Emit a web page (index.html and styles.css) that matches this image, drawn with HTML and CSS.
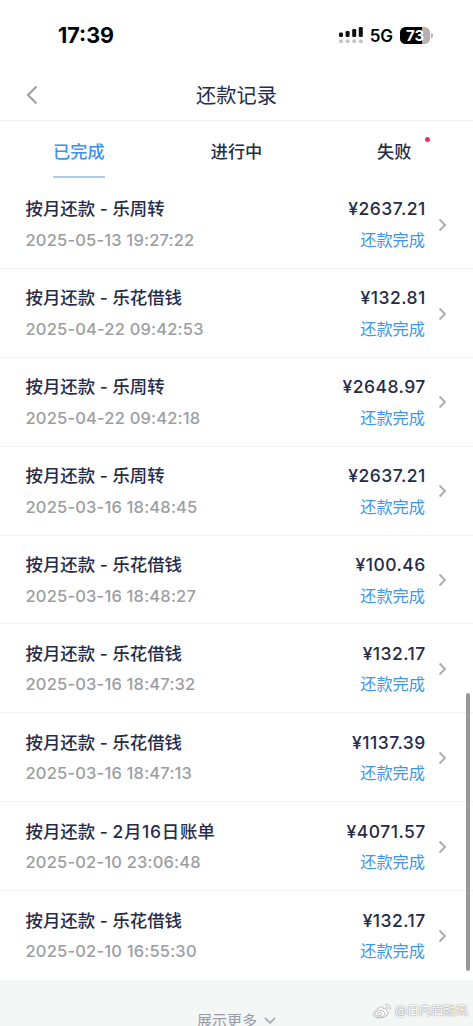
FILE: index.html
```
<!DOCTYPE html>
<html lang="zh-CN">
<head>
<meta charset="utf-8">
<title>还款记录</title>
<link rel="stylesheet" href="styles.css">
</head>
<body>
<div class="screen">
  <div class="status">
    <span class="clock">17:39</span>
    <div class="indicators">
      <svg class="signal" width="24" height="17" viewBox="0 0 24 17"><g fill="#111"><rect x="0" y="5.5" width="4" height="4.5" rx="1.3"/><rect x="6.6" y="4" width="4" height="6" rx="1.3"/><rect x="13.2" y="2" width="4" height="8" rx="1.3"/><rect x="19.8" y="0" width="4" height="10" rx="1.3"/></g><g fill="#c4c4c4"><circle cx="2" cy="14.2" r="2"/><circle cx="8.6" cy="14.2" r="2"/><circle cx="15.2" cy="14.2" r="2"/><circle cx="21.8" cy="14.2" r="2"/></g></svg>
      <span class="network">5G</span>
      <div class="battery"><span>73</span></div><i class="cap"></i>
    </div>
  </div>
  <header class="nav">
    <svg class="back" width="12" height="20" viewBox="0 0 12 20"><path d="M10.5 1.5 2 10l8.500 8.500" fill="none" stroke="#a0a0a2" stroke-width="2.200"/></svg>
    <h1>还款记录</h1>
  </header>
  <nav class="tabs">
    <span class="tab active">已完成</span>
    <span class="tab">进行中</span>
    <span class="tab">失败<i class="dot"></i></span>
  </nav>
  <main class="list">
    <div class="row"><div class="info"><b class="name">按月还款 - 乐周转</b><span class="date">2025-05-13 19:27:22</span></div><div class="sum"><b class="amount">¥2637.21</b><span class="state">还款完成</span></div><svg class="go" viewBox="0 0 9 14"><path d="M1.500 1.500 7 7l-5.500 5.500"/></svg></div>
    <div class="row"><div class="info"><b class="name">按月还款 - 乐花借钱</b><span class="date">2025-04-22 09:42:53</span></div><div class="sum"><b class="amount">¥132.81</b><span class="state">还款完成</span></div><svg class="go" viewBox="0 0 9 14"><path d="M1.500 1.500 7 7l-5.500 5.500"/></svg></div>
    <div class="row"><div class="info"><b class="name">按月还款 - 乐周转</b><span class="date">2025-04-22 09:42:18</span></div><div class="sum"><b class="amount">¥2648.97</b><span class="state">还款完成</span></div><svg class="go" viewBox="0 0 9 14"><path d="M1.500 1.500 7 7l-5.500 5.500"/></svg></div>
    <div class="row"><div class="info"><b class="name">按月还款 - 乐周转</b><span class="date">2025-03-16 18:48:45</span></div><div class="sum"><b class="amount">¥2637.21</b><span class="state">还款完成</span></div><svg class="go" viewBox="0 0 9 14"><path d="M1.500 1.500 7 7l-5.500 5.500"/></svg></div>
    <div class="row"><div class="info"><b class="name">按月还款 - 乐花借钱</b><span class="date">2025-03-16 18:48:27</span></div><div class="sum"><b class="amount">¥100.46</b><span class="state">还款完成</span></div><svg class="go" viewBox="0 0 9 14"><path d="M1.500 1.500 7 7l-5.500 5.500"/></svg></div>
    <div class="row"><div class="info"><b class="name">按月还款 - 乐花借钱</b><span class="date">2025-03-16 18:47:32</span></div><div class="sum"><b class="amount">¥132.17</b><span class="state">还款完成</span></div><svg class="go" viewBox="0 0 9 14"><path d="M1.500 1.500 7 7l-5.500 5.500"/></svg></div>
    <div class="row"><div class="info"><b class="name">按月还款 - 乐花借钱</b><span class="date">2025-03-16 18:47:13</span></div><div class="sum"><b class="amount">¥1137.39</b><span class="state">还款完成</span></div><svg class="go" viewBox="0 0 9 14"><path d="M1.500 1.500 7 7l-5.500 5.500"/></svg></div>
    <div class="row"><div class="info"><b class="name">按月还款 - <span class="bill">2月16日</span>账单</b><span class="date">2025-02-10 23:06:48</span></div><div class="sum"><b class="amount">¥4071.57</b><span class="state">还款完成</span></div><svg class="go" viewBox="0 0 9 14"><path d="M1.500 1.500 7 7l-5.500 5.500"/></svg></div>
    <div class="row"><div class="info"><b class="name">按月还款 - 乐花借钱</b><span class="date">2025-02-10 16:55:30</span></div><div class="sum"><b class="amount">¥132.17</b><span class="state">还款完成</span></div><svg class="go" viewBox="0 0 9 14"><path d="M1.500 1.500 7 7l-5.500 5.500"/></svg></div>
  </main>
  <footer class="more"><span>展示更多</span><svg width="12" height="8" viewBox="0 0 12 8"><path d="M1 1l5 5 5-5" fill="none" stroke="#aeb0b6" stroke-width="1.800"/></svg></footer>
  <i class="scrollbar"></i>
  <div class="watermark">
    <svg width="19" height="17" viewBox="0 0 19 17" fill="#fff" stroke="#aaa" stroke-width=".8"><path d="M7.500 4.200c1.800-.8 3 0 2.600 1.700 2-.8 3.800-.2 3.200 1.700 1.800.5 2.300 1.700 1.800 3-1.600 4.500-13.600 6.500-14.500 1C.3 9 4 5.600 7.500 4.200z"/><ellipse cx="7.200" cy="10.700" rx="4.800" ry="3.400"/><circle cx="6.600" cy="11" r="1.800"/><path d="M12 1.500c3.500-.8 6.300 1.800 5.200 5.300M12.500 4c1.800-.3 2.700.8 2.300 2.300" fill="none"/></svg>
    <span>@日内眉融讯</span>
  </div>
</div>
</body>
</html>
```
FILE: styles.css
```
* { box-sizing: border-box; }
body { margin: 0; background: #fff; font-family: Inter, "Noto Sans CJK SC", sans-serif; color: #252b48; }
.screen { position: relative; width: 473px; height: 1026px; overflow: hidden; display: flex; flex-direction: column; }
.status { height: 70px; flex: none; display: flex; justify-content: space-between; padding: 0 40px 0 58px; align-items: center; color: #000; }
.clock { font-size: 21.500px; font-weight: 700; letter-spacing: 0; line-height: 26px; }
.indicators { display: flex; align-items: center; }
.network { font-size: 17px; font-weight: 600; letter-spacing: -.1px; margin: 1px 7px 0 7px; line-height: 20px; }
.battery { width: 30px; height: 17px; border-radius: 5.500px; background: linear-gradient(90deg, #000 73%, #b2b2b2 73%); color: #fff; display: flex; align-items: center; justify-content: center; font-size: 15px; font-weight: 700; line-height: 17px; }
.cap { width: 2px; height: 5px; margin-left: 1px; border-radius: 0 2px 2px 0; background: #b2b2b2; }
.nav { height: 51px; flex: none; display: flex; align-items: center; padding-left: 26px; border-bottom: 1px solid #f0f0f1; }
.nav h1 { flex: 1; margin: 0 38px 0 0; padding-top: 2px; text-align: center; font-size: 20.200px; font-weight: 400; line-height: 30px; }
.tabs { height: 59px; flex: none; display: grid; grid-template-columns: repeat(3, 1fr); justify-items: center; }
.tab { position: relative; height: 57px; padding-top: 18px; font-size: 17.200px; line-height: 26px; font-weight: 500; }
.active { color: #3d94e8; border-bottom: 2px solid #a9cdea; }
.dot { position: absolute; right: -19px; top: 16px; width: 5px; height: 5px; border-radius: 50%; background: #f02c68; }
.list { height: 800px; flex: none; display: grid; grid-template-rows: repeat(9, 1fr); }
.row { display: flex; padding: 16.400px 26px 0 25.500px; border-bottom: 1px solid #f3f3f4; }
.row:last-child { border: 0; }
.info, .sum { display: flex; flex-direction: column; gap: 4.600px; line-height: 26px; white-space: nowrap; }
.info { flex: 1; }
.sum { align-items: flex-end; }
.name { font-size: 17.400px; font-weight: 500; }
.bill { letter-spacing: .800px; }
.date { font-size: 16.500px; font-weight: 450; letter-spacing: .180px; color: #9c9da4; }
.amount { font-size: 17.500px; font-weight: 500; letter-spacing: .480px; margin-right: -.8px; }
.state { font-size: 16.200px; color: #4096e6; }
.go { width: 9px; height: 14px; margin: 21.300px 0 0 13px; fill: none; stroke: #aeaeb0; stroke-width: 2; }
.more { flex: 1; background: #f4f5f5; display: flex; justify-content: center; align-items: flex-start; gap: 7px; padding-top: 30px; font-size: 15px; line-height: 22px; color: #9a9ba7; }
.more svg { margin-top: 7px; }
.scrollbar { position: absolute; right: 3px; top: 693px; width: 4px; height: 278px; border-radius: 2px; background: #999; }
.watermark { position: absolute; left: 373px; top: 1002px; display: flex; align-items: center; gap: 3px; color: #fff; font-size: 12.200px; line-height: 18px; white-space: nowrap; text-shadow: 0 0 1px #888, 0 0 2px #aaa; }
```
